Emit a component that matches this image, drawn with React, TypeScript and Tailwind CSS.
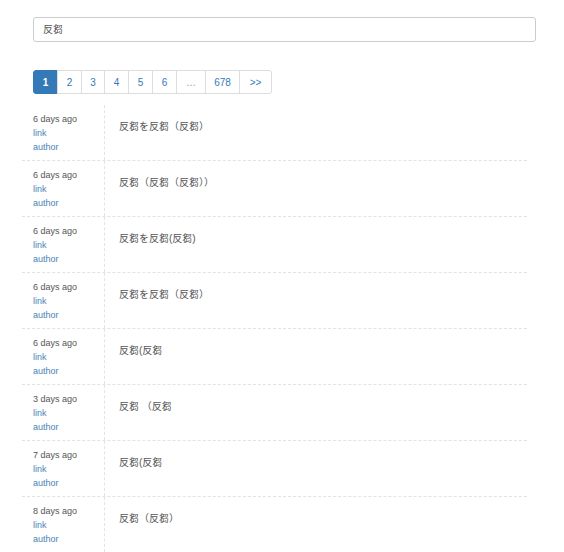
import React from "react";

type Entry = {
	ago: string;
	text: string;
};

const entries: Entry[] = [
	{ ago: "6 days ago", text: "反芻を反芻（反芻）" },
	{ ago: "6 days ago", text: "反芻（反芻（反芻））" },
	{ ago: "6 days ago", text: "反芻を反芻(反芻)" },
	{ ago: "6 days ago", text: "反芻を反芻（反芻）" },
	{ ago: "6 days ago", text: "反芻(反芻" },
	{ ago: "3 days ago", text: "反芻 （反芻" },
	{ ago: "7 days ago", text: "反芻(反芻" },
	{ ago: "8 days ago", text: "反芻（反芻）" },
];

const pages = [
	{ label: "1", w: "w-[25px]" },
	{ label: "2", w: "w-[25px]" },
	{ label: "3", w: "w-[24px]" },
	{ label: "4", w: "w-[25px]" },
	{ label: "5", w: "w-[25px]" },
	{ label: "6", w: "w-[25px]" },
	{ label: "…", w: "w-[30px]" },
	{ label: "678", w: "w-[35px]" },
	{ label: ">>", w: "w-[33px]" },
];

const font = {
	fontFamily: '"Liberation Sans", "Noto Sans CJK JP", sans-serif',
};

function Pagination() {
	return (
		<div className="flex">
			{pages.map((p, i) => (
				<div
					key={p.label}
					className={
						p.w +
						(i === 0
							? " h-[24px] flex items-center justify-center bg-[#337ab7] border border-[#337ab7] text-white font-bold text-[10px] rounded-l-[3px]"
							: i === pages.length - 1
								? " h-[24px] -ml-px flex items-center justify-center border border-[#ddd] text-[#337ab7] text-[10px] rounded-r-[3px]"
								: p.label === "…"
									? " h-[24px] -ml-px flex items-center justify-center border border-[#ddd] text-[#999] text-[10px]"
									: " h-[24px] -ml-px flex items-center justify-center border border-[#ddd] text-[#337ab7] text-[10px]")
					}
				>
					{p.label}
				</div>
			))}
		</div>
	);
}

function Row({ entry }: { entry: Entry }) {
	return (
		<div className="flex h-[56px] border-b border-dashed border-[#e3e3e3]">
			<div className="w-[82px] pl-[11px] pt-[7px] text-[9px] leading-[14px]">
				<div className="text-[#555]">{entry.ago}</div>
				<div className="text-[#4a7fb8]">link</div>
				<div className="text-[#4a7fb8]">author</div>
			</div>
			<div className="flex-1 border-l border-dashed border-[#e3e3e3] pl-[14px] pt-[15px] text-[10px] leading-[14px] text-[#555]">
				{entry.text}
			</div>
		</div>
	);
}

export default function App() {
	return (
		<div className="w-[564px] h-[552px] overflow-hidden bg-white" style={font}>
			<div className="pt-[17px] pl-[33px]">
				<div className="w-[503px] h-[25px] border border-[#ccc] rounded-[3px] flex items-center pl-[9px] text-[10px] text-[#555]">
					反芻
				</div>
				<div className="mt-[28px]">
					<Pagination />
				</div>
			</div>
			<div className="mt-[11px] ml-[22px] w-[505px]">
				{entries.map((e, i) => (
					<Row key={i} entry={e} />
				))}
			</div>
		</div>
	);
}
